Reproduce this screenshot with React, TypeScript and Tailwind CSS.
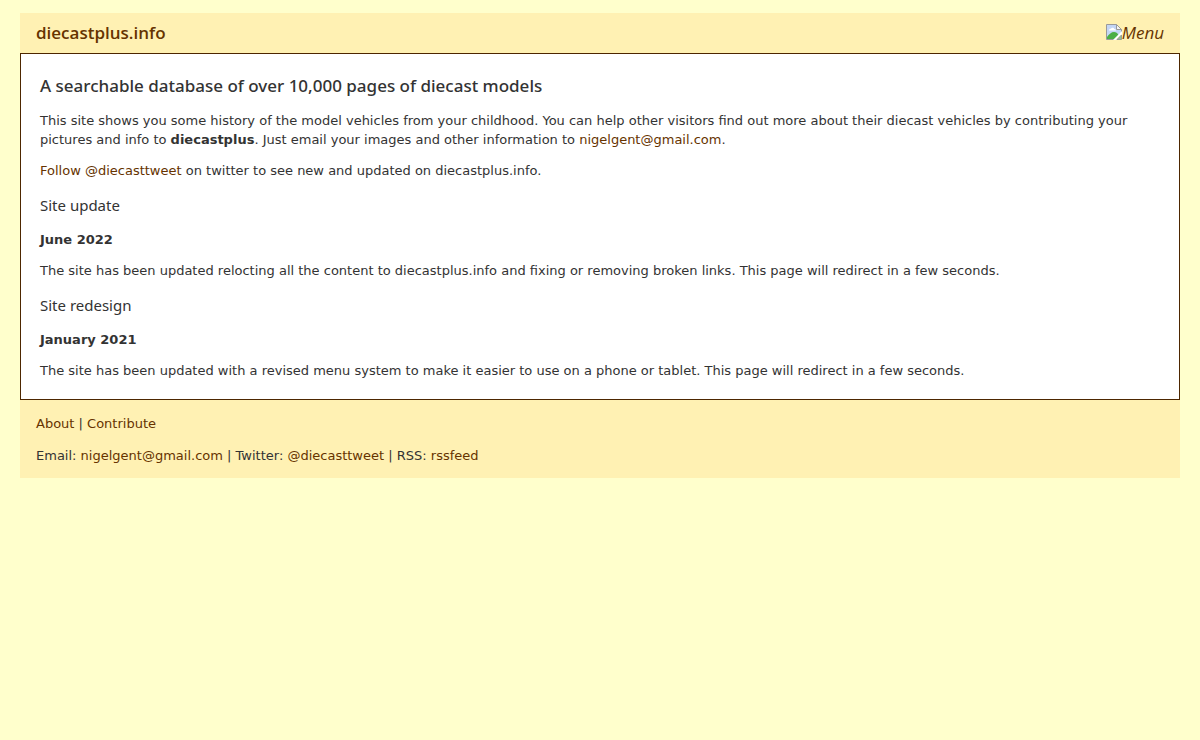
import React from 'react';

const updates = [
  {
    title: 'Site update',
    date: 'June 2022',
    text: 'The site has been updated relocting all the content to diecastplus.info and fixing or removing broken links. This page will redirect in a few seconds.',
  },
  {
    title: 'Site redesign',
    date: 'January 2021',
    text: 'The site has been updated with a revised menu system to make it easier to use on a phone or tablet. This page will redirect in a few seconds.',
  },
];

const BrokenImage: React.FC = () => (
  <svg width="16" height="16" viewBox="0 0 16 16" aria-hidden="true">
    <path d="M.5.5h10l5 5v3l-7 7h-8z" fill="#c4d6f5" stroke="#9a9a9a" />
    <path d="M3 6.500c0-1.300 1-2 2-1.700.5-1.500 3-1.400 3.300.2 1.100 0 1.700.7 1.700 1.500z" fill="#fff" />
    <path d="M1 15v-2C3 10 5.500 8 8 8c2 0 3.500 1 4.500 3L8.500 15z" fill="#4caf45" />
    <path d="M10.500.5v5h5z" fill="#f5f5f5" stroke="#9a9a9a" />
    <path d="M16 7v3l-6 6H7z" fill="#fff" />
    <path d="M15.500 11v4.500H11z" fill="#8fc98a" stroke="#9a9a9a" />
  </svg>
);

const TextLink: React.FC<{ href: string; children: React.ReactNode }> = ({ href, children }) => (
  <a href={href} className="text-[#663300] hover:underline">
    {children}
  </a>
);

export default function App() {
  return (
    <div className="min-h-screen bg-[#ffffcc] px-5 pt-[13px] font-[Verdana,'DejaVu_Sans',sans-serif] text-[13px] leading-[19px] text-[#333333]">
      <header className="flex h-10 items-center justify-between bg-[#fff1b3] px-4 pb-0.5 font-['Open_Sans',sans-serif] text-[17px] text-[#663300]">
        <a href="#home" className="font-semibold">diecastplus.info</a>
        <a href="#menu" className="flex items-center font-medium italic">
          <BrokenImage />
          Menu
        </a>
      </header>

      <main className="flex flex-col gap-3 border border-[#4d2600] bg-white px-[19px] py-[19px]">
        <h1 className="font-['Noto_Sans',sans-serif] text-[17px] leading-[26px] font-medium">
          A searchable database of over 10,000 pages of diecast models
        </h1>
        <p>
          This site shows you some history of the model vehicles from your childhood. You can help other visitors
          find out more about their diecast vehicles by contributing your pictures and info
          to <strong>diecastplus</strong>. Just email your images and other information
          to <TextLink href="mailto:nigelgent@gmail.com">nigelgent@gmail.com</TextLink>.
        </p>
        <p>
          <TextLink href="#twitter">Follow @diecasttweet</TextLink> on twitter to see new and updated on
          diecastplus.info.
        </p>
        {updates.map((update) => (
          <React.Fragment key={update.title}>
            <h2 className="font-['Noto_Sans',sans-serif] text-[15px] leading-[26px]">{update.title}</h2>
            <h3 className="font-bold">{update.date}</h3>
            <p>{update.text}</p>
          </React.Fragment>
        ))}
      </main>

      <footer className="flex flex-col gap-[13px] bg-[#fff1b3] px-4 pt-[14px] pb-[13px]">
        <p>
          <TextLink href="#about">About</TextLink> | <TextLink href="#contribute">Contribute</TextLink>
        </p>
        <p>
          Email: <TextLink href="mailto:nigelgent@gmail.com">nigelgent@gmail.com</TextLink> | Twitter:{' '}
          <TextLink href="#twitter">@diecasttweet</TextLink> | RSS: <TextLink href="#rss">rssfeed</TextLink>
        </p>
      </footer>
    </div>
  );
}
